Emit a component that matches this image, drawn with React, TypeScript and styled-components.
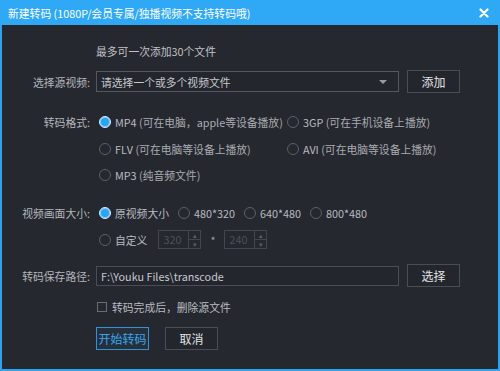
import * as React from 'react';
import styled, { createGlobalStyle } from 'styled-components';

const GlobalStyle = createGlobalStyle`
  html, body {
    margin: 0;
    padding: 0;
    background: #25282f;
  }
  body {
    font-family: "Noto Sans CJK SC", "Microsoft YaHei", sans-serif;
    font-size: 10.8px;
  }
`;

const formats = [
  { name: 'MP4', note: '(可在电脑，apple等设备播放)', checked: true },
  { name: '3GP', note: '(可在手机设备上播放)' },
  { name: 'FLV', note: '(可在电脑等设备上播放)' },
  { name: 'AVI', note: '(可在电脑等设备上播放)' },
  { name: 'MP3', note: '(纯音频文件)' },
];

const sizes = ['原视频大小', '480*320', '640*480', '800*480'];

const Radio: React.FC<{ checked?: boolean; label: React.ReactNode }> = ({ checked, label }) => (
  <Option>
    <RadioDot checked={checked} />
    <OptionText>{label}</OptionText>
  </Option>
);

const Spin: React.FC<{ value: string }> = ({ value }) => (
  <SpinBox>
    <SpinValue>{value}</SpinValue>
    <SpinArrows>
      <SpinArrow>▴</SpinArrow>
      <SpinArrow>▾</SpinArrow>
    </SpinArrows>
  </SpinBox>
);

const App: React.FC = () => {
  return (
    <>
      <GlobalStyle />
      <Window>
        <TitleBar>
          <Title>新建转码 (1080P/会员专属/独播视频不支持转码哦)</Title>
          <Close>
            <svg width="10" height="10" viewBox="0 0 10 10">
              <path d="M1.5 1.5 L8.5 8.5 M8.5 1.5 L1.5 8.5" stroke="#fff" strokeWidth="2.2" strokeLinecap="round" />
            </svg>
          </Close>
        </TitleBar>

        <Body>
          <Notice>最多可一次添加30个文件</Notice>

          <Row top={11} h={22}>
            <Label>选择源视频:</Label>
            <Select>
              <span>请选择一个或多个视频文件</span>
              <Caret />
            </Select>
            <Button>添加</Button>
          </Row>

          <Row top={19} h={20} align="start">
            <Label>转码格式:</Label>
            <FormatGrid>
              {formats.map((f) => (
                <Radio
                  key={f.name}
                  checked={f.checked}
                  label={
                    <>
                      {f.name} <Note>{f.note}</Note>
                    </>
                  }
                />
              ))}
            </FormatGrid>
          </Row>

          <Row top={18} h={20}>
            <Label>视频画面大小:</Label>
            <Options>
              {sizes.map((s, i) => (
                <Radio key={s} checked={i === 0} label={s} />
              ))}
            </Options>
          </Row>

          <Row top={6} h={21}>
            <Label />
            <Options>
              <Radio label="自定义" />
              <SpinGroup>
                <Spin value="320" />
                <Times>*</Times>
                <Spin value="240" />
              </SpinGroup>
            </Options>
          </Row>

          <Row top={14} h={22}>
            <Label>转码保存路径:</Label>
            <PathInput>F:\Youku Files\transcode</PathInput>
            <Button>选择</Button>
          </Row>

          <Row top={10} h={20}>
            <Label />
            <Check>
              <CheckBox />
              <span>转码完成后，删除源文件</span>
            </Check>
          </Row>

          <Row top={10} h={23}>
            <Label />
            <Actions>
              <Button primary>开始转码</Button>
              <Button>取消</Button>
            </Actions>
          </Row>
        </Body>
      </Window>
    </>
  );
};

export default App;

const Window = styled.div`
  width: 500px;
  height: 371px;
  box-sizing: border-box;
  display: flex;
  flex-direction: column;
  background: #25282f;
  border: 2px solid #2ba3ee;
  border-top: none;
  color: #c6c8cc;
`;

const TitleBar = styled.div`
  height: 25px;
  margin: 0 -2px;
  padding: 0 8px;
  display: flex;
  align-items: center;
  justify-content: space-between;
  background: #2fa9f5;
  color: #fff;
`;

const Title = styled.div`
  font-size: 10.8px;
`;

const Close = styled.div`
  display: flex;
  align-items: center;
  margin-right: 3px;
`;

const Body = styled.div`
  padding: 18px 0 0 0;
  display: flex;
  flex-direction: column;
`;

const Notice = styled.div`
  margin-left: 94px;
  height: 16px;
  line-height: 16px;
  color: #c0c2c6;
`;

const Row = styled.div<{ top: number; h: number; align?: string }>`
  display: flex;
  align-items: ${(p) => (p.align === 'start' ? 'flex-start' : 'center')};
  margin-top: ${(p) => p.top}px;
  min-height: ${(p) => p.h}px;
`;

const Label = styled.div`
  width: 88px;
  flex: none;
  text-align: right;
  margin-right: 6px;
  color: #b4b6bb;
  line-height: 20px;
  white-space: nowrap;
`;

const Select = styled.div`
  width: 303px;
  height: 21px;
  flex: none;
  box-sizing: border-box;
  border: 1px solid #55585f;
  background: #23262c;
  display: flex;
  align-items: center;
  justify-content: space-between;
  padding: 0 8px 0 4px;
  color: #c6c8cc;
`;

const Caret = styled.span`
  width: 0;
  height: 0;
  border-left: 4px solid transparent;
  border-right: 4px solid transparent;
  border-top: 4px solid #9a9ca2;
  margin-right: 3px;
`;

const PathInput = styled.div`
  width: 303px;
  height: 20px;
  flex: none;
  box-sizing: border-box;
  border: 1px solid #4b4e55;
  background: #23262c;
  padding: 0 4px;
  line-height: 18px;
  color: #c6c8cc;
`;

const Button = styled.div<{ primary?: boolean }>`
  width: 53px;
  height: 23px;
  flex: none;
  box-sizing: border-box;
  margin-left: 8px;
  display: flex;
  align-items: center;
  justify-content: center;
  white-space: nowrap;
  border: 1px solid ${(p) => (p.primary ? '#2f93d6' : '#4a4d54')};
  background: ${(p) => (p.primary ? '#26303b' : '#23262c')};
  color: ${(p) => (p.primary ? '#3aa6ee' : '#e2e3e5')};
  font-size: 12px;
`;

const Actions = styled.div`
  display: flex;
  gap: 16px;

  & > div {
    margin-left: 0;
  }
`;

const FormatGrid = styled.div`
  display: grid;
  grid-template-columns: 188px auto;
  row-gap: 6.5px;
  padding-left: 3px;
`;

const Options = styled.div`
  display: flex;
  align-items: center;
  gap: 9px;
  padding-left: 3px;
`;

const Option = styled.div`
  display: flex;
  align-items: center;
  height: 20px;
  gap: 4px;
`;

const RadioDot = styled.span<{ checked?: boolean }>`
  flex: none;
  width: 12px;
  height: 12px;
  box-sizing: border-box;
  border-radius: 50%;
  border: 1px solid ${(p) => (p.checked ? '#d8eefc' : '#5d6067')};
  background: ${(p) => (p.checked ? '#2aa4f4' : 'transparent')};
  box-shadow: ${(p) => (p.checked ? 'inset 0 0 0 1px #7fc9f8' : 'none')};
`;

const OptionText = styled.span`
  color: #b9bbc0;
  white-space: nowrap;
`;

const Note = styled.span`
  color: #a9abb0;
`;

const SpinGroup = styled.div`
  display: flex;
  align-items: center;
  gap: 9px;
  margin-left: 2px;
`;

const SpinBox = styled.div`
  flex: none;
  width: 43px;
  height: 19px;
  box-sizing: border-box;
  border: 1px solid #43464d;
  display: flex;
  align-items: stretch;
`;

const SpinValue = styled.div`
  flex: 1;
  padding-left: 4px;
  line-height: 17px;
  color: #4d5057;
`;

const SpinArrows = styled.div`
  width: 11px;
  display: flex;
  flex-direction: column;
  border-left: 1px solid #43464d;
`;

const SpinArrow = styled.div`
  flex: 1;
  font-size: 7px;
  line-height: 8px;
  text-align: center;
  color: #5c5f66;
  & + & {
    border-top: 1px solid #43464d;
  }
`;

const Times = styled.span`
  color: #9a9ca2;
`;

const Check = styled.div`
  display: flex;
  align-items: center;
  gap: 5px;
  padding-left: 1px;
  color: #b9bbc0;
`;

const CheckBox = styled.span`
  flex: none;
  width: 10px;
  height: 10px;
  box-sizing: border-box;
  border: 1px solid #6a6d74;
`;
